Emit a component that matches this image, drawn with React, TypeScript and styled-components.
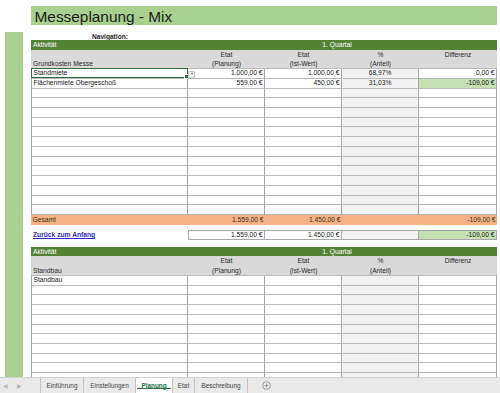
import React from "react";
import styled, { createGlobalStyle } from "styled-components";

const ROW = 9.73;
const COLS = "157px 77px 77px 77px 78px";

const GlobalStyle = createGlobalStyle`
  html, body {
    margin: 0;
    padding: 0;
  }
  body {
    width: 500px;
    height: 393px;
    overflow: hidden;
    background: #fff;
    font-family: "Liberation Sans", Arial, sans-serif;
  }
  * {
    box-sizing: border-box;
  }
`;

type Align = "left" | "center" | "right";

type DataRow = {
  label?: string;
  plan?: string;
  ist?: string;
  anteil?: string;
  diff?: string;
  diffBg?: string;
  selected?: boolean;
};

const Window = styled.div`
  width: 500px;
  height: 393px;
  display: flex;
  flex-direction: column;
  overflow: hidden;
`;

const SheetArea = styled.div`
  flex: 1;
  min-height: 0;
  display: flex;
  flex-direction: column;
  overflow: hidden;
`;

const TitleBar = styled.div`
  margin: 6px 3px 0 31px;
  height: 19px;
  padding: 3px 0 0 3.5px;
  background: #a9d08e;
  font-size: 15.4px;
  line-height: 16px;
  color: #1b1b1b;
`;

const Main = styled.div`
  flex: 1;
  min-height: 0;
  display: flex;
`;

const SideStrip = styled.div`
  width: 18px;
  margin: 7px 8px 0 5px;
  background: #a9d08e;
`;

const Content = styled.div`
  width: 466px;
  display: flex;
  flex-direction: column;
`;

const NavRow = styled.div`
  height: 23px;
  padding: 8px 0 0 61px;
  font-size: 6.6px;
  font-weight: bold;
  color: #222;
`;

const Row = styled.div<{ $h?: number; $bg?: string }>`
  display: grid;
  grid-template-columns: ${COLS};
  height: ${(p) => p.$h ?? ROW}px;
  background: ${(p) => p.$bg ?? "transparent"};
  flex-shrink: 0;
`;

const HeadRow = styled(Row)`
  background: #548235;
  color: #fff;
  font-size: 6.7px;
  line-height: ${ROW}px;
`;

const HeadText = styled.div<{ $span?: boolean }>`
  padding-left: 2px;
  ${(p) =>
    p.$span &&
    `grid-column: 2 / 6; text-align: center; padding-right: 13px;`}
`;

const SubHeadRow = styled(Row)`
  background: #d9d9d9;
  border-bottom: 1px solid #bcbcbc;
`;

const SubHeadCell = styled.div<{ $align?: Align }>`
  display: flex;
  flex-direction: column;
  font-size: 6.7px;
  line-height: ${ROW}px;
  color: #2a2a2a;
  text-align: ${(p) => p.$align ?? "center"};
  padding: 0 2px;
`;

const Line = styled.div`
  height: ${ROW}px;
  white-space: nowrap;
`;

const Cell = styled.div<{ $align?: Align; $bg?: string; $first?: boolean }>`
  position: relative;
  height: 100%;
  padding: 0 1.5px;
  font-size: 6.7px;
  line-height: ${ROW - 1}px;
  text-align: ${(p) => p.$align ?? "left"};
  background: ${(p) => p.$bg ?? "#fff"};
  border-bottom: 1px solid #b9b9b9;
  border-right: 1px solid #a6a6a6;
  ${(p) => (p.$first ? "border-left: 1px solid #a6a6a6;" : "")}
  color: #1a1a1a;
  white-space: nowrap;
`;

const Selection = styled.div`
  position: absolute;
  inset: -1px -1px 0 -1px;
  border: 1px solid #2f6e45;
  pointer-events: none;

  &::after {
    content: "";
    position: absolute;
    right: -2px;
    bottom: -2px;
    width: 3px;
    height: 3px;
    background: #2f6e45;
    border: 0.5px solid #fff;
  }
`;

const DropButton = styled.div`
  position: absolute;
  left: calc(100% + 1px);
  top: 1.5px;
  width: 7px;
  height: 7px;
  border: 1px solid #c8c8c8;
  background: #fff;
  z-index: 2;
  display: flex;
  align-items: center;
  justify-content: center;

  &::before {
    content: "";
    border-left: 1.5px solid transparent;
    border-right: 1.5px solid transparent;
    border-top: 2px solid #555;
  }
`;

const TotalRow = styled(Row)`
  background: #f4b183;
  font-size: 6.7px;
  line-height: ${ROW}px;
  color: #3b3024;
`;

const TotalCell = styled.div<{ $align?: Align }>`
  padding: 0 1.5px;
  text-align: ${(p) => p.$align ?? "left"};
  white-space: nowrap;
`;

const Spacer = styled.div<{ $h: number }>`
  height: ${(p) => p.$h}px;
  flex-shrink: 0;
`;

const LinkRow = styled(Row)`
  font-size: 6.7px;
  line-height: ${ROW - 2}px;
`;

const BackLink = styled.a`
  padding-left: 2px;
  color: #2a2ab8;
  font-weight: bold;
  text-decoration: underline;
  line-height: ${ROW}px;
  cursor: pointer;
`;

const BoxCell = styled.div<{ $bg?: string; $first?: boolean }>`
  padding: 0 1.5px;
  text-align: right;
  background: ${(p) => p.$bg ?? "#fff"};
  border-top: 1px solid #a8a8a8;
  border-bottom: 1px solid #a8a8a8;
  border-right: 1px solid #a8a8a8;
  ${(p) => (p.$first ? "border-left: 1px solid #a8a8a8;" : "")}
  color: #1a1a1a;
  white-space: nowrap;
`;

const TabBar = styled.div`
  height: 16px;
  flex-shrink: 0;
  display: flex;
  background: #e9e9e9;
  border-top: 1px solid #d0d0d0;
  font-size: 6.4px;
  color: #454545;
`;

const NavArrows = styled.div`
  width: 41px;
  display: flex;
  align-items: center;
  gap: 9px;
  padding-left: 3px;
  color: #b8b8b8;
  font-size: 5.5px;
  border-right: 1px solid #c4c4c4;
`;

const Tab = styled.div<{ $w: number; $active?: boolean }>`
  position: relative;
  width: ${(p) => p.$w}px;
  display: flex;
  align-items: center;
  justify-content: center;
  padding-bottom: 1px;
  border-right: 1px solid #c4c4c4;
  background: ${(p) => (p.$active ? "#fff" : "transparent")};
  color: ${(p) => (p.$active ? "#217346" : "#454545")};
  font-weight: ${(p) => (p.$active ? "bold" : "normal")};

  ${(p) =>
    p.$active &&
    `&::after {
      content: "";
      position: absolute;
      left: 1px;
      right: 1px;
      bottom: 4px;
      height: 1px;
      background: #217346;
    }`}
`;

const AddSheet = styled.div`
  display: flex;
  align-items: center;
  padding-left: 14px;
`;

const firstTable: DataRow[] = [
  {
    label: "Standmiete",
    plan: "1.000,00 €",
    ist: "1.000,00 €",
    anteil: "68,97%",
    diff: "0,00 €",
    selected: true,
  },
  {
    label: "Flächenmiete Obergeschoß",
    plan: "559,00 €",
    ist: "450,00 €",
    anteil: "31,03%",
    diff: "-109,00 €",
    diffBg: "#c6e0b4",
  },
  ...Array.from({ length: 13 }, () => ({})),
];

const secondTable: DataRow[] = [
  { label: "Standbau" },
  ...Array.from({ length: 10 }, () => ({})),
];

const TableHead = ({ title }: { title: string }) => (
  <>
    <HeadRow>
      <HeadText>Aktivität</HeadText>
      <HeadText $span>1. Quartal</HeadText>
    </HeadRow>
    <SubHeadRow $h={ROW * 2}>
      <SubHeadCell $align="left">
        <Line />
        <Line>{title}</Line>
      </SubHeadCell>
      <SubHeadCell>
        <Line>Etat</Line>
        <Line>(Planung)</Line>
      </SubHeadCell>
      <SubHeadCell>
        <Line>Etat</Line>
        <Line>(Ist-Wert)</Line>
      </SubHeadCell>
      <SubHeadCell>
        <Line>%</Line>
        <Line>(Anteil)</Line>
      </SubHeadCell>
      <SubHeadCell>
        <Line>Differenz</Line>
      </SubHeadCell>
    </SubHeadRow>
  </>
);

const DataRows = ({ rows }: { rows: DataRow[] }) => (
  <>
    {rows.map((r, i) => (
      <Row key={i}>
        <Cell $first>
          {r.label}
          {r.selected && (
            <>
              <Selection />
              <DropButton />
            </>
          )}
        </Cell>
        <Cell $align="right">{r.plan}</Cell>
        <Cell $align="right">{r.ist}</Cell>
        <Cell $align="center" $bg="#f2f2f2">
          {r.anteil}
        </Cell>
        <Cell $align="right" $bg={r.diffBg}>
          {r.diff}
        </Cell>
      </Row>
    ))}
  </>
);

const PlusIcon = () => (
  <svg width="9" height="9" viewBox="0 0 10 10">
    <circle cx="5" cy="5" r="4.3" fill="none" stroke="#7a7a7a" strokeWidth="0.8" />
    <path d="M5 2.8v4.4M2.8 5h4.4" stroke="#7a7a7a" strokeWidth="0.8" />
  </svg>
);

export default function App() {
  return (
    <Window>
      <GlobalStyle />
      <SheetArea>
        <TitleBar>Messeplanung - Mix</TitleBar>
        <Main>
          <SideStrip />
          <Content>
            <NavRow>Navigation:</NavRow>

            <TableHead title="Grundkosten Messe" />
            <DataRows rows={firstTable} />

            <TotalRow>
              <TotalCell>Gesamt</TotalCell>
              <TotalCell $align="right">1.559,00 €</TotalCell>
              <TotalCell $align="right">1.450,00 €</TotalCell>
              <TotalCell />
              <TotalCell $align="right">-109,00 €</TotalCell>
            </TotalRow>

            <Spacer $h={5.8} />

            <LinkRow $h={9.5}>
              <BackLink>Zurück zum Anfang</BackLink>
              <BoxCell $first>1.559,00 €</BoxCell>
              <BoxCell>1.450,00 €</BoxCell>
              <BoxCell $bg="#f2f2f2" />
              <BoxCell $bg="#c6e0b4">-109,00 €</BoxCell>
            </LinkRow>

            <Spacer $h={6.8} />

            <TableHead title="Standbau" />
            <DataRows rows={secondTable} />
          </Content>
        </Main>
      </SheetArea>

      <TabBar>
        <NavArrows>
          <span>◀</span>
          <span>▶</span>
        </NavArrows>
        <Tab $w={43}>Einführung</Tab>
        <Tab $w={52}>Einstellungen</Tab>
        <Tab $w={37} $active>
          Planung
        </Tab>
        <Tab $w={22}>Etat</Tab>
        <Tab $w={53}>Beschreibung</Tab>
        <AddSheet>
          <PlusIcon />
        </AddSheet>
      </TabBar>
    </Window>
  );
}
